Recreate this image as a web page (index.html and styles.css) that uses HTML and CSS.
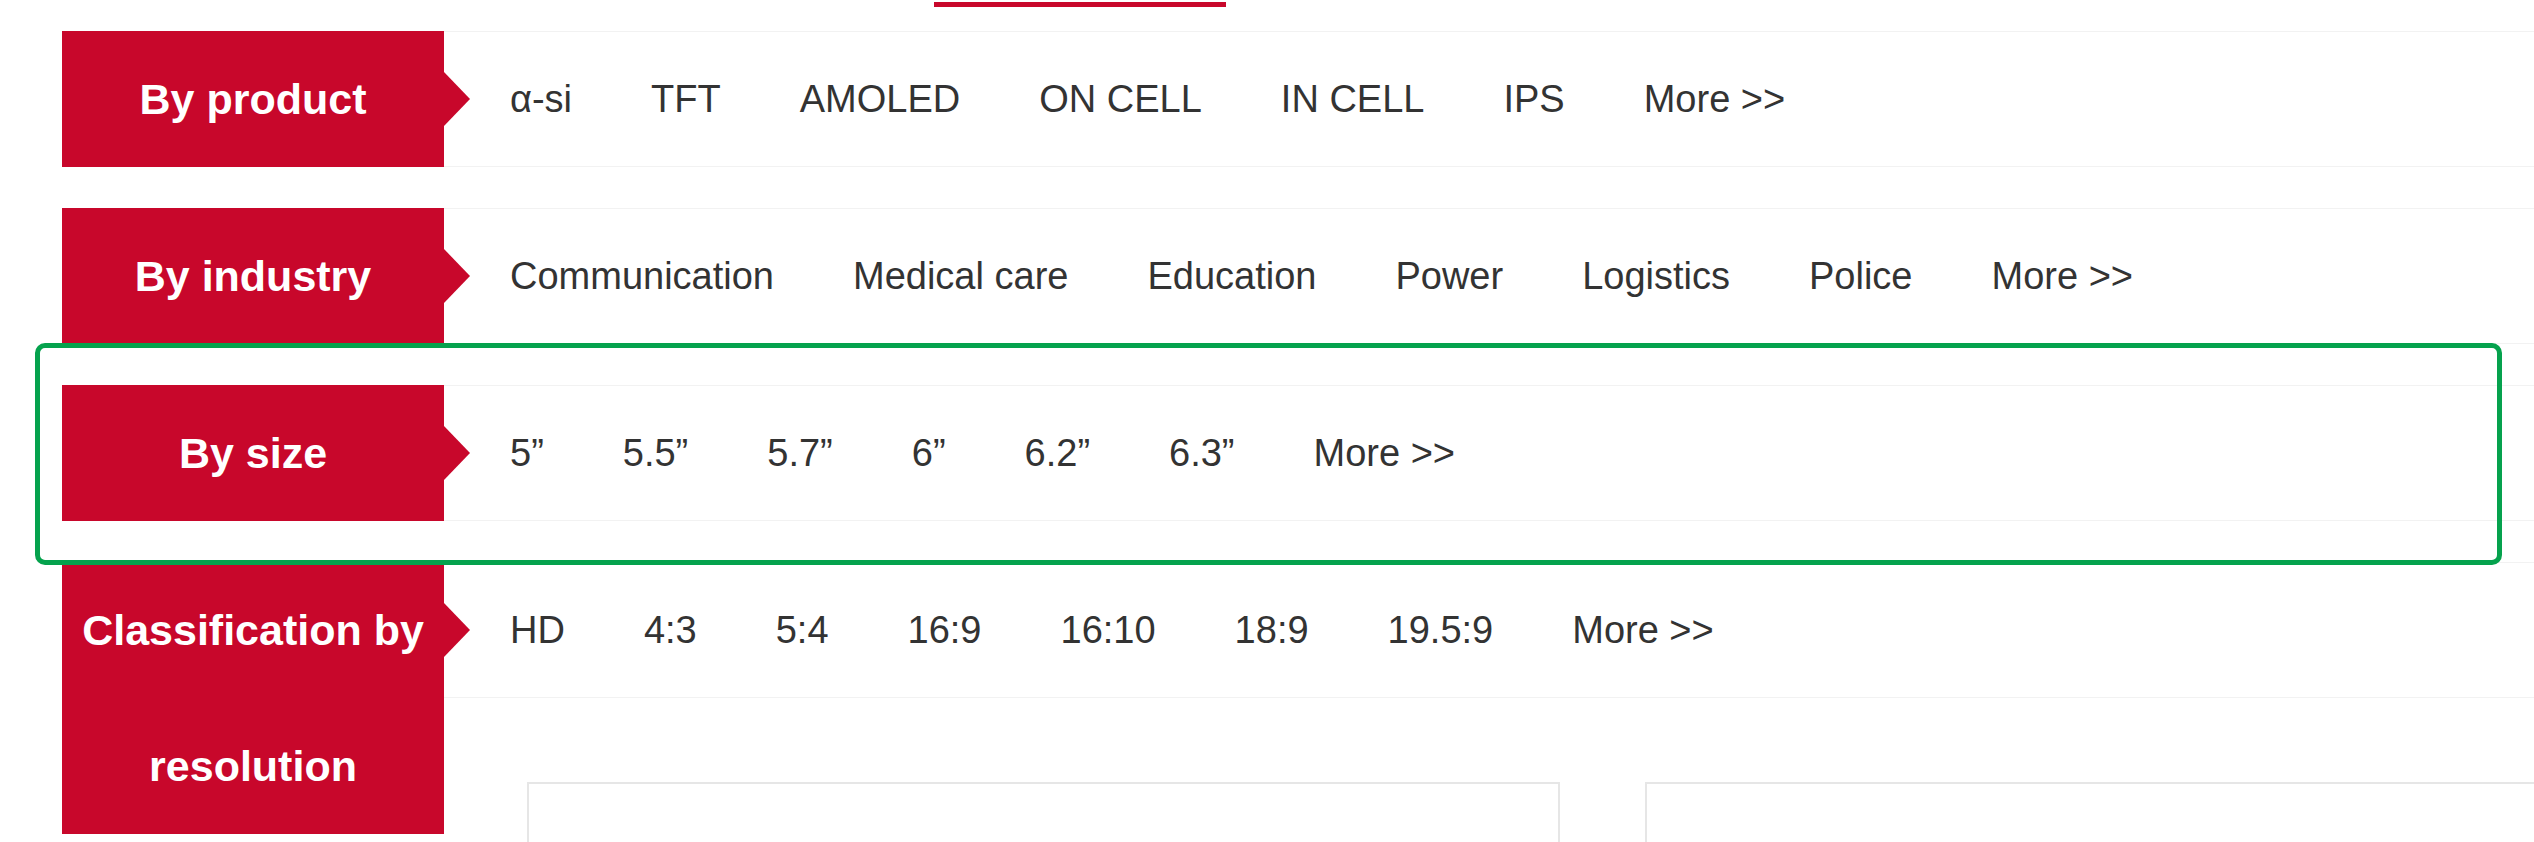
FILE: index.html
```html
<!DOCTYPE html>
<html lang="en">
<head>
<meta charset="utf-8">
<title>Product filters</title>
<link rel="stylesheet" href="styles.css">
</head>
<body>
<div class="page">
  <div class="tabs"><span class="tab-bar"></span></div>
  <div class="filters">
    <div class="filter-row">
      <div class="filter-label">By product</div>
      <div class="filter-body">
        <ul class="filter-list">
          <li>α-si</li><li>TFT</li><li>AMOLED</li><li>ON CELL</li><li>IN CELL</li><li>IPS</li><li>More &gt;&gt;</li>
        </ul>
      </div>
    </div>
    <div class="filter-row">
      <div class="filter-label">By industry</div>
      <div class="filter-body">
        <ul class="filter-list">
          <li>Communication</li><li>Medical care</li><li>Education</li><li>Power</li><li>Logistics</li><li>Police</li><li>More &gt;&gt;</li>
        </ul>
      </div>
    </div>
    <div class="filter-row">
      <div class="filter-label">By size</div>
      <div class="filter-body">
        <ul class="filter-list">
          <li>5”</li><li>5.5”</li><li>5.7”</li><li>6”</li><li>6.2”</li><li>6.3”</li><li>More &gt;&gt;</li>
        </ul>
      </div>
    </div>
    <div class="filter-row">
      <div class="filter-label">Classification by resolution</div>
      <div class="filter-body">
        <ul class="filter-list">
          <li>HD</li><li>4:3</li><li>5:4</li><li>16:9</li><li>16:10</li><li>18:9</li><li>19.5:9</li><li>More &gt;&gt;</li>
        </ul>
        <div class="products">
          <div class="product-card"></div>
          <div class="product-card"></div>
        </div>
      </div>
    </div>
  </div>
  <div class="highlight"></div>
</div>
</body>
</html>
```
FILE: styles.css
```css
html, body {
  margin: 0;
  padding: 0;
  overflow: hidden;
  background: #ffffff;
}

body {
  font-family: "Liberation Sans", Arial, Helvetica, sans-serif;
}

.page {
  position: relative;
  width: 2534px;
}

.tabs {
  height: 31px;
  box-sizing: border-box;
  padding-top: 2px;
}

.tab-bar {
  display: block;
  margin-left: 934px;
  width: 292px;
  height: 5px;
  background: #c8072b;
}

.filters {
  display: flex;
  flex-direction: column;
  gap: 41px;
  padding-left: 62px;
}

.filter-row {
  display: flex;
  align-items: flex-start;
}

.filter-label {
  position: relative;
  flex: 0 0 382px;
  background: #c8072b;
  color: #ffffff;
  font-weight: 700;
  font-size: 43px;
  line-height: 136px;
  text-align: center;
}

.filter-label::after {
  content: "";
  position: absolute;
  left: 100%;
  top: 41px;
  border-left: 26px solid #c8072b;
  border-top: 27px solid transparent;
  border-bottom: 27px solid transparent;
}

.filter-body {
  flex: 1 1 auto;
  min-width: 0;
}

.filter-list {
  list-style: none;
  margin: 0;
  padding: 0 0 0 66px;
  height: 136px;
  box-sizing: border-box;
  border-top: 1px solid #f2f2f2;
  border-bottom: 1px solid #f2f2f2;
  display: flex;
  align-items: center;
  gap: 79px;
  font-size: 38px;
  color: #333333;
  white-space: nowrap;
}

.products {
  display: flex;
  gap: 85px;
  margin: 84px 0 0 83px;
}

.product-card {
  flex: 0 0 1033px;
  height: 420px;
  box-sizing: border-box;
  border: 2px solid #e6e6e6;
  background: #ffffff;
}

.highlight {
  position: absolute;
  left: 35px;
  top: 343px;
  width: 2467px;
  height: 222px;
  box-sizing: border-box;
  border: 5px solid #05a24d;
  border-radius: 10px;
  pointer-events: none;
}
```
